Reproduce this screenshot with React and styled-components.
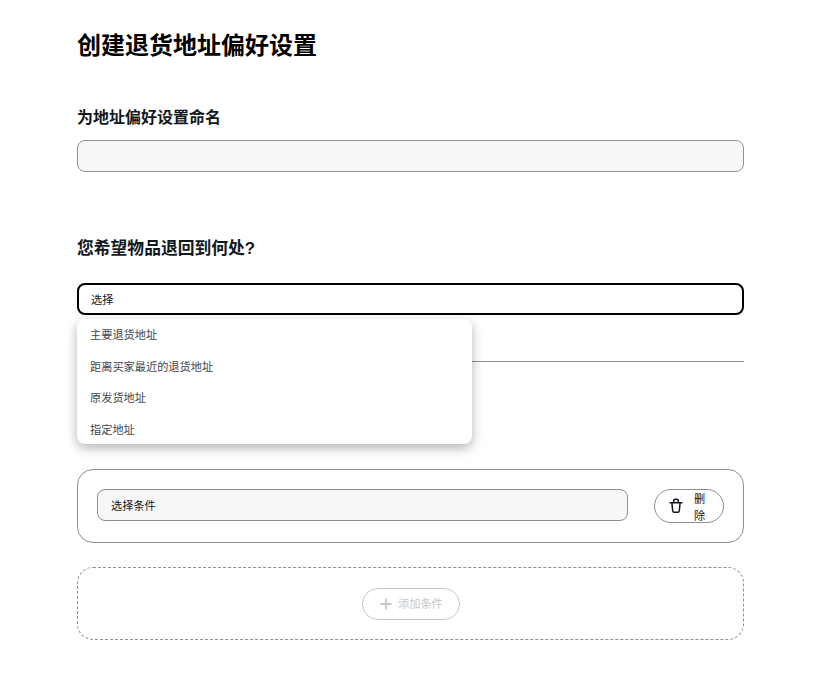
import React from "react";
import styled, { createGlobalStyle } from "styled-components";

const GlobalStyle = createGlobalStyle`
  * { box-sizing: border-box; }
  html, body { margin: 0; background: #fff; }
  body {
    font-family: "Liberation Sans", "Noto Sans CJK SC", sans-serif;
    color: #111820;
  }
`;

const Page = styled.main`
  width: 667px;
  margin-left: 77px;
  padding-top: 28px;
  padding-bottom: 33px;
`;

const Title = styled.h1`
  margin: 0;
  font-size: 24px;
  line-height: 36px;
  font-weight: 700;
  color: #000;
`;

const Label = styled.h2`
  margin: ${(p) => p.$top}px 0 ${(p) => p.$bottom}px;
  font-size: ${(p) => p.$size}px;
  line-height: 24px;
  font-weight: 700;
`;

const TextInput = styled.input`
  display: block;
  width: 100%;
  height: 32px;
  padding: 0 13px;
  background: #f7f7f7;
  border: 1px solid #8f8f8f;
  border-radius: 8px;
  outline: none;
`;

const SelectArea = styled.div`
  position: relative;
`;

const SelectBox = styled.div`
  display: flex;
  align-items: center;
  height: 32px;
  padding: 0 12px;
  font-size: 11.2px;
  background: #fff;
  border: 2px solid #000;
  border-radius: 8px;
`;

const Menu = styled.ul`
  position: absolute;
  top: 35.75px;
  left: 0;
  z-index: 2;
  width: 395px;
  height: 125px;
  margin: 0;
  padding: 0;
  list-style: none;
  background: #fff;
  border-radius: 8px;
  box-shadow: 0 4px 12px rgba(0, 0, 0, 0.3);
`;

const MenuItem = styled.li`
  display: flex;
  align-items: center;
  height: 31.4px;
  padding: 0 13px;
  font-size: 11.2px;
  color: #41464b;
`;

const Divider = styled.hr`
  height: 1px;
  margin: 46px 0 107px;
  background: #8f8f8f;
  border: 0;
`;

const Card = styled.section`
  display: flex;
  align-items: flex-start;
  justify-content: space-between;
  height: 74px;
  padding: 19px 19px 0;
  border: 1px solid #8f8f8f;
  border-radius: 16px;
`;

const DashedCard = styled.section`
  display: flex;
  align-items: center;
  justify-content: center;
  height: 73px;
  margin-top: 24px;
  border: 1px dashed #8f8f8f;
  border-radius: 16px;
`;

const ConditionField = styled.div`
  display: flex;
  align-items: center;
  width: 531px;
  height: 32px;
  padding: 0 13px;
  font-size: 11.2px;
  background: #f7f7f7;
  border: 1px solid #8f8f8f;
  border-radius: 8px;
`;

const PillButton = styled.button`
  display: flex;
  align-items: center;
  width: ${(p) => p.$width}px;
  height: ${(p) => p.$height}px;
  padding: 0;
  padding-left: ${(p) => p.$left}px;
  font-family: inherit;
  font-size: 11.2px;
  line-height: 1.5;
  color: ${(p) => p.$color};
  background: #fff;
  border: 1px solid ${(p) => p.$border};
  border-radius: 17px;
`;

const ButtonText = styled.span`
  display: block;
  width: ${(p) => p.$width}px;
  margin-left: ${(p) => p.$gap}px;
  padding-top: ${(p) => p.$drop}px;
  text-align: left;
`;

const Icon = styled.svg`
  flex: none;
  display: block;
`;

const TrashIcon = () => (
  <Icon width="14" height="16" viewBox="0 0 14 16" fill="none" stroke="#111820" strokeWidth="1.5" strokeLinejoin="round">
    <path d="M1 4.75h12" strokeLinecap="round" />
    <path d="M4.7 4.75V2.6A1.4 1.4 0 0 1 6.1 1.2h1.8a1.4 1.4 0 0 1 1.4 1.4v2.15" />
    <path d="M2.9 4.75l.8 8.3a1.2 1.2 0 0 0 1.2 1.1h4.2a1.2 1.2 0 0 0 1.2-1.1l.8-8.3" />
  </Icon>
);

const PlusIcon = () => (
  <Icon width="12" height="12" viewBox="0 0 12 12" fill="none" stroke="#c7c7c7" strokeWidth="1.8">
    <path d="M6 .5v11M.5 6h11" />
  </Icon>
);

const menuOptions = ["主要退货地址", "距离买家最近的退货地址", "原发货地址", "指定地址"];

export default function App() {
  return (
    <Page>
      <GlobalStyle />
      <Title>创建退货地址偏好设置</Title>

      <Label $size={16} $top={42} $bottom={10}>为地址偏好设置命名</Label>
      <TextInput aria-label="为地址偏好设置命名" />

      <Label $size={16.8} $top={65} $bottom={22}>您希望物品退回到何处?</Label>
      <SelectArea>
        <SelectBox>选择</SelectBox>
        <Menu>
          {menuOptions.map((option) => (
            <MenuItem key={option}>{option}</MenuItem>
          ))}
        </Menu>
      </SelectArea>

      <Divider />

      <Card>
        <ConditionField>选择条件</ConditionField>
        <PillButton $width={70} $height={34} $left={14} $color="#111820" $border="#8f8f8f">
          <TrashIcon />
          <ButtonText $width={11} $gap={11} $drop={4}>删除</ButtonText>
        </PillButton>
      </Card>

      <DashedCard>
        <PillButton $width={98} $height={32} $left={17} $color="#c7c7c7" $border="#c7c7c7">
          <PlusIcon />
          <ButtonText $width={46} $gap={6.5} $drop={2}>添加条件</ButtonText>
        </PillButton>
      </DashedCard>
    </Page>
  );
}
